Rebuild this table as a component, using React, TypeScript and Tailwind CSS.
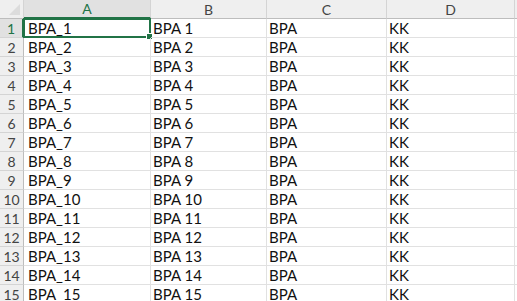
import React from "react";

const cols = [
  { key: "A", w: "w-[127px]", pad: "pl-[4px]" },
  { key: "B", w: "w-[116px]", pad: "pl-[2px]" },
  { key: "C", w: "w-[120px]", pad: "pl-[2px]" },
  { key: "D", w: "w-[128px]", pad: "pl-[2px]" },
];

const rows = Array.from({ length: 15 }, (_, i) => i + 1);

function cellText(col: string, n: number) {
  if (col === "A") return `BPA_${n}`;
  if (col === "B") return `BPA ${n}`;
  if (col === "C") return "BPA";
  return "KK";
}

export default function App() {
  return (
    <div
      className="w-[517px] h-[301px] overflow-hidden bg-white text-[15px] text-[#111]"
      style={{ fontFamily: "Lato, 'Liberation Sans', sans-serif" }}
    >
      {/* column headers */}
      <div className="flex h-[19px]">
        <div className="relative w-[24px] shrink-0 bg-[#efefef] border-r border-b border-[#d4d4d4] border-b-[#bdbdbd]">
          <div className="absolute right-[3px] bottom-[3px] w-0 h-0 border-l-[11px] border-l-transparent border-b-[11px] border-b-[#dcdcdc]" />
        </div>
        {cols.map((c) => (
          <div
            key={c.key}
            className={`${c.w} shrink-0 flex items-center justify-center border-r text-[14px] ${
              c.key === "A"
                ? "bg-[#e1e1e1] text-[#217346] border-b-2 border-b-[#217346] border-r-[#d4d4d4]"
                : "bg-[#efefef] text-[#444] border-b border-b-[#bdbdbd] border-r-[#d4d4d4]"
            }`}
          >
            {c.key}
          </div>
        ))}
        <div className="flex-1 bg-[#efefef] border-b border-b-[#bdbdbd]" />
      </div>

      {/* rows */}
      {rows.map((n) => (
        <div key={n} className="flex h-[19px]">
          <div
            className={`w-[24px] shrink-0 flex items-center justify-center border-b border-r text-[14px] ${
              n === 1
                ? "bg-[#e1e1e1] text-[#217346] border-b-[#d4d4d4] border-r-2 border-r-[#217346]"
                : "bg-[#efefef] text-[#444] border-b-[#d4d4d4] border-r-[#bdbdbd]"
            }`}
          >
            {n}
          </div>
          {cols.map((c) => (
            <div
              key={c.key}
              className={`relative ${c.w} shrink-0 flex items-center ${c.pad} border-r border-b border-[#e1e1e1] leading-none`}
            >
              {cellText(c.key, n)}
              {n === 1 && c.key === "A" && (
                <>
                  <div className="absolute -left-[1px] -top-[1px] -right-[1px] -bottom-[1px] border-2 border-[#217346]" />
                  <div className="absolute -right-[3px] -bottom-[3px] w-[5px] h-[5px] bg-[#217346] border border-white box-content" />
                </>
              )}
            </div>
          ))}
          <div className="flex-1 border-b border-[#e1e1e1]" />
        </div>
      ))}
    </div>
  );
}
